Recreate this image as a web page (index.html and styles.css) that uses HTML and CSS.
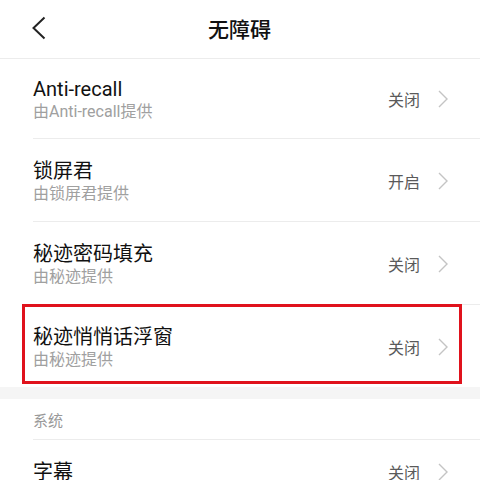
FILE: index.html
```html
<!DOCTYPE html>
<html lang="zh-CN">
<head>
    <meta charset="UTF-8">
    <meta name="viewport" content="width=device-width, initial-scale=1.0">
    <title>无障碍</title>
    <link rel="stylesheet" href="styles.css">
</head>
<body>

<div class="page">
    <div class="header">
        <svg class="back" width="14" height="24" viewBox="0 0 14 24">
            <polyline points="12.5,1.5 1.5,12 12.5,22.5" fill="none" stroke="#222" stroke-width="2"/>
        </svg>
        <div class="title">无障碍</div>
        <div></div>
    </div>

    <div class="list">
        <div class="item first">
            <div class="item-text">
                <div class="item-title">Anti-recall</div>
                <div class="item-sub">由Anti-recall提供</div>
            </div>
            <div class="item-value">关闭</div>
            <svg class="arrow" width="10" height="18" viewBox="0 0 10 18"><polyline points="1,1 9,9 1,17" fill="none" stroke="#c4c4c4" stroke-width="1.4"/></svg>
        </div>
        <div class="item">
            <div class="item-text">
                <div class="item-title">锁屏君</div>
                <div class="item-sub">由锁屏君提供</div>
            </div>
            <div class="item-value">开启</div>
            <svg class="arrow" width="10" height="18" viewBox="0 0 10 18"><polyline points="1,1 9,9 1,17" fill="none" stroke="#c4c4c4" stroke-width="1.4"/></svg>
        </div>
        <div class="item">
            <div class="item-text">
                <div class="item-title">秘迹密码填充</div>
                <div class="item-sub">由秘迹提供</div>
            </div>
            <div class="item-value">关闭</div>
            <svg class="arrow" width="10" height="18" viewBox="0 0 10 18"><polyline points="1,1 9,9 1,17" fill="none" stroke="#c4c4c4" stroke-width="1.4"/></svg>
        </div>
        <div class="item last">
            <div class="item-text">
                <div class="item-title">秘迹悄悄话浮窗</div>
                <div class="item-sub">由秘迹提供</div>
            </div>
            <div class="item-value">关闭</div>
            <svg class="arrow" width="10" height="18" viewBox="0 0 10 18"><polyline points="1,1 9,9 1,17" fill="none" stroke="#c4c4c4" stroke-width="1.4"/></svg>
        </div>
    </div>

    <div class="band"></div>

    <div class="group-label">系统</div>
    <div class="list">
        <div class="item single">
            <div class="item-text">
                <div class="item-title">字幕</div>
            </div>
            <div class="item-value">关闭</div>
            <svg class="arrow" width="10" height="18" viewBox="0 0 10 18"><polyline points="1,1 9,9 1,17" fill="none" stroke="#c4c4c4" stroke-width="1.4"/></svg>
        </div>
    </div>

    <!-- annotation box -->
    <div class="highlight"></div>
</div>

</body>
</html>
```

FILE: styles.css
```css
* {
    box-sizing: border-box;
}

body {
    margin: 0;
    background-color: #fff;
    font-family: Roboto, "Noto Sans CJK SC", sans-serif;
    color: #111;
}

.page {
    position: relative;
    width: 480px;
    height: 480px;
    overflow: hidden;
}

.header {
    display: grid;
    grid-template-columns: 1fr auto 1fr;
    align-items: center;
    height: 59px;
    padding: 0 33px 2px 32px;
    border-bottom: 1px solid #ececec;
}

.back {
    display: block;
}

.title {
    font-size: 21px;
    font-weight: 500;
    color: #111;
}

.item {
    display: flex;
    align-items: center;
    height: 83px;
    margin-left: 33px;
    padding: 2px 32px 0 0;
    border-bottom: 1px solid #ececec;
}

.item.first {
    height: 80px;
    padding-top: 0;
}

.item.last {
    height: 82px;
    border-bottom: none;
}

.item.single {
    height: 64px;
    padding-top: 0;
}

.item-text {
    flex: 1;
}

.item-title {
    font-size: 20px;
    line-height: 26px;
    color: #111;
}

.item-sub {
    font-size: 16px;
    line-height: 20px;
    color: #a0a0a0;
}

.item-value {
    font-size: 16px;
    color: #5a5a5a;
    margin-right: 18px;
}

.arrow {
    display: block;
}

.band {
    height: 12px;
    background-color: #f5f5f5;
}

.group-label {
    display: flex;
    align-items: center;
    height: 41px;
    margin-left: 33px;
    font-size: 15px;
    color: #999;
    border-bottom: 1px solid #ececec;
}

.highlight {
    position: absolute;
    left: 22px;
    top: 304px;
    width: 440px;
    height: 80px;
    border: 3px solid #e0121c;
}
```
